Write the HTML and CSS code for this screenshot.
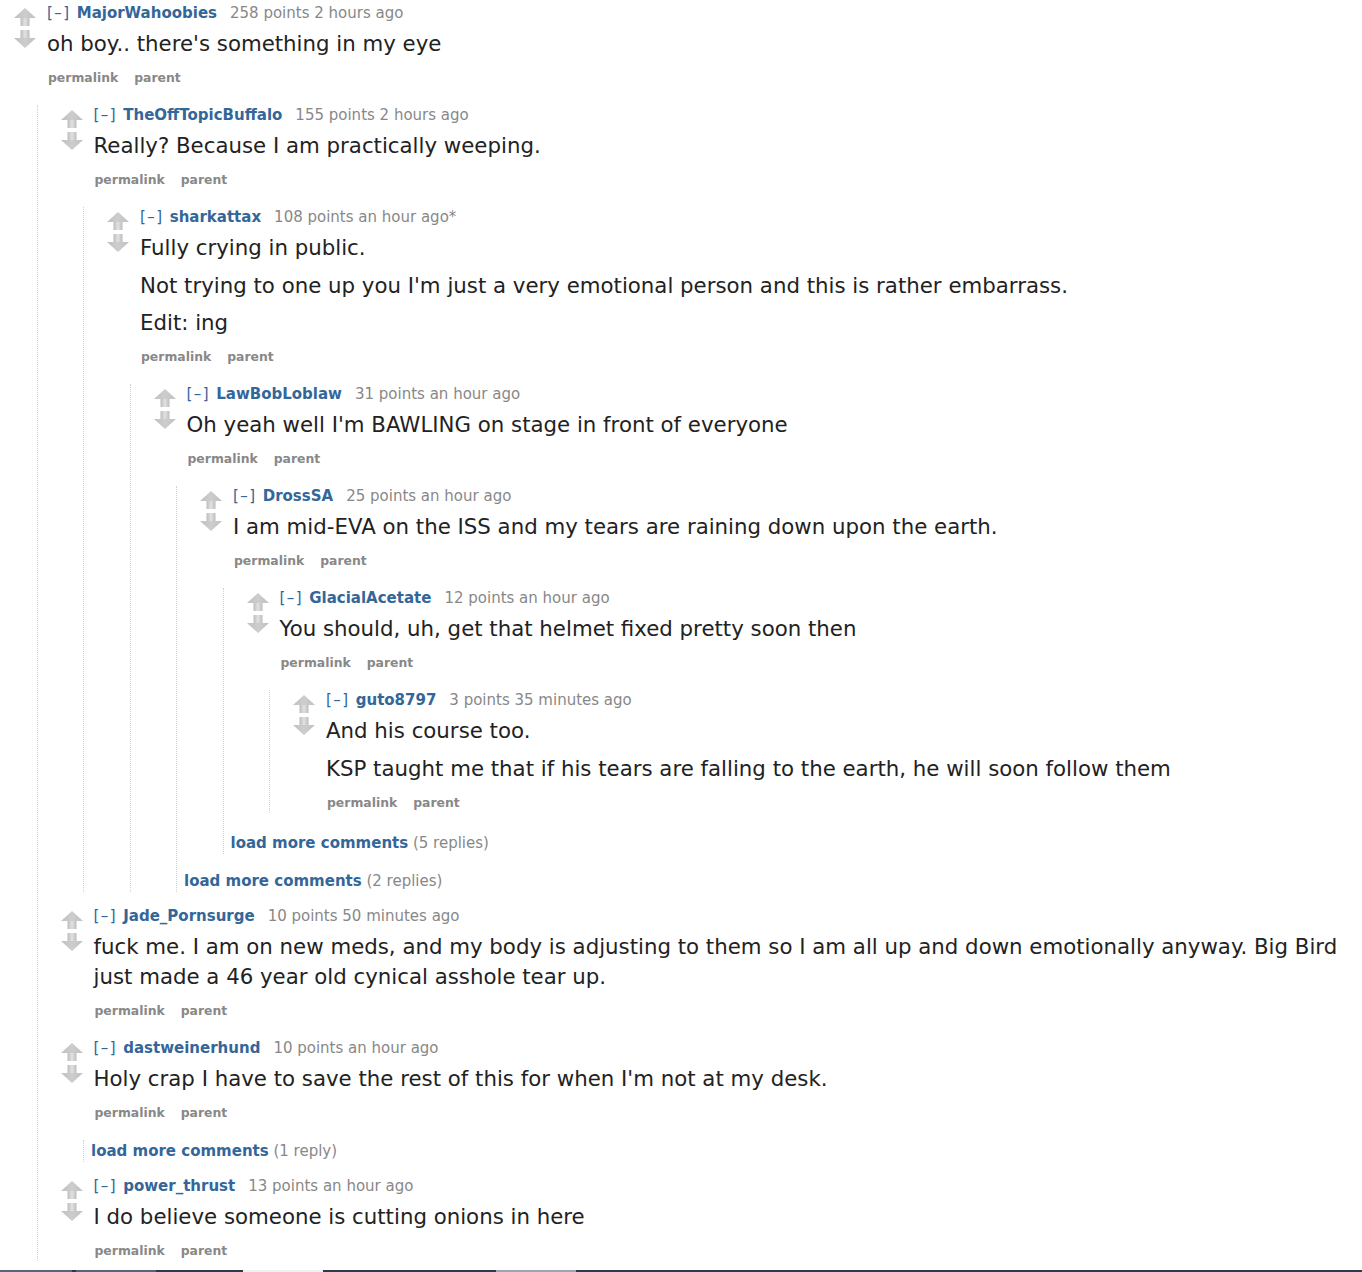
FILE: index.html
```html
<!DOCTYPE html>
<html>
<head>
<meta charset="utf-8">
<title>comments</title>
<link rel="stylesheet" href="styles.css">
</head>
<body>
<svg class="defs" width="0" height="0" aria-hidden="true">
  <defs>
    <linearGradient id="stem" x1="0" y1="0" x2="1" y2="0">
      <stop offset="0" stop-color="#bcbcbc"/>
      <stop offset="0.5" stop-color="#e2e2e2"/>
      <stop offset="1" stop-color="#bcbcbc"/>
    </linearGradient>
    <linearGradient id="head" x1="0" y1="0" x2="1" y2="0">
      <stop offset="0" stop-color="#c0c0c0"/>
      <stop offset="0.5" stop-color="#cdcdcd"/>
      <stop offset="1" stop-color="#c0c0c0"/>
    </linearGradient>
    <symbol id="up" viewBox="0 0 22 18">
      <polygon points="0,10 11,0 22,10" fill="url(#head)"/>
      <rect x="6.5" y="10" width="9" height="8" fill="url(#stem)"/>
    </symbol>
    <symbol id="down" viewBox="0 0 22 18">
      <rect x="6.5" y="0" width="9" height="8" fill="url(#stem)"/>
      <polygon points="0,8 22,8 11,18" fill="url(#head)"/>
    </symbol>
  </defs>
</svg>

<div class="page">
  <div class="comment">
    <div class="row">
      <div class="midcol"><svg class="arrow up"><use href="#up"/></svg><svg class="arrow down"><use href="#down"/></svg></div>
      <div class="entry">
        <p class="tagline"><a class="expand">[–]</a><a class="author">MajorWahoobies</a><span class="score">258 points 2 hours ago</span></p>
        <div class="md"><p>oh boy.. there's something in my eye</p></div>
        <ul class="buttons"><li>permalink</li><li>parent</li></ul>
      </div>
    </div>
    <div class="child">

      <div class="comment">
        <div class="row">
          <div class="midcol"><svg class="arrow up"><use href="#up"/></svg><svg class="arrow down"><use href="#down"/></svg></div>
          <div class="entry">
            <p class="tagline"><a class="expand">[–]</a><a class="author">TheOffTopicBuffalo</a><span class="score">155 points 2 hours ago</span></p>
            <div class="md"><p>Really? Because I am practically weeping.</p></div>
            <ul class="buttons"><li>permalink</li><li>parent</li></ul>
          </div>
        </div>
        <div class="child">

          <div class="comment">
            <div class="row">
              <div class="midcol"><svg class="arrow up"><use href="#up"/></svg><svg class="arrow down"><use href="#down"/></svg></div>
              <div class="entry">
                <p class="tagline"><a class="expand">[–]</a><a class="author">sharkattax</a><span class="score">108 points an hour ago*</span></p>
                <div class="md">
                  <p>Fully crying in public.</p>
                  <p>Not trying to one up you I'm just a very emotional person and this is rather embarrass.</p>
                  <p>Edit: ing</p>
                </div>
                <ul class="buttons"><li>permalink</li><li>parent</li></ul>
              </div>
            </div>
            <div class="child">

              <div class="comment">
                <div class="row">
                  <div class="midcol"><svg class="arrow up"><use href="#up"/></svg><svg class="arrow down"><use href="#down"/></svg></div>
                  <div class="entry">
                    <p class="tagline"><a class="expand">[–]</a><a class="author">LawBobLoblaw</a><span class="score">31 points an hour ago</span></p>
                    <div class="md"><p>Oh yeah well I'm BAWLING on stage in front of everyone</p></div>
                    <ul class="buttons"><li>permalink</li><li>parent</li></ul>
                  </div>
                </div>
                <div class="child">

                  <div class="comment">
                    <div class="row">
                      <div class="midcol"><svg class="arrow up"><use href="#up"/></svg><svg class="arrow down"><use href="#down"/></svg></div>
                      <div class="entry">
                        <p class="tagline"><a class="expand">[–]</a><a class="author">DrossSA</a><span class="score">25 points an hour ago</span></p>
                        <div class="md"><p>I am mid-EVA on the ISS and my tears are raining down upon the earth.</p></div>
                        <ul class="buttons"><li>permalink</li><li>parent</li></ul>
                      </div>
                    </div>
                    <div class="child">

                      <div class="comment">
                        <div class="row">
                          <div class="midcol"><svg class="arrow up"><use href="#up"/></svg><svg class="arrow down"><use href="#down"/></svg></div>
                          <div class="entry">
                            <p class="tagline"><a class="expand">[–]</a><a class="author">GlacialAcetate</a><span class="score">12 points an hour ago</span></p>
                            <div class="md"><p>You should, uh, get that helmet fixed pretty soon then</p></div>
                            <ul class="buttons"><li>permalink</li><li>parent</li></ul>
                          </div>
                        </div>
                        <div class="child">

                          <div class="comment">
                            <div class="row">
                              <div class="midcol"><svg class="arrow up"><use href="#up"/></svg><svg class="arrow down"><use href="#down"/></svg></div>
                              <div class="entry">
                                <p class="tagline"><a class="expand">[–]</a><a class="author">guto8797</a><span class="score">3 points 35 minutes ago</span></p>
                                <div class="md">
                                  <p>And his course too.</p>
                                  <p>KSP taught me that if his tears are falling to the earth, he will soon follow them</p>
                                </div>
                                <ul class="buttons"><li>permalink</li><li>parent</li></ul>
                              </div>
                            </div>
                          </div>

                        </div>
                      </div>

                      <div class="more"><a>load more comments</a> <span>(5 replies)</span></div>
                    </div>
                  </div>

                  <div class="more"><a>load more comments</a> <span>(2 replies)</span></div>
                </div>
              </div>

            </div>
          </div>

        </div>
      </div>

      <div class="comment">
        <div class="row">
          <div class="midcol"><svg class="arrow up"><use href="#up"/></svg><svg class="arrow down"><use href="#down"/></svg></div>
          <div class="entry">
            <p class="tagline"><a class="expand">[–]</a><a class="author">Jade_Pornsurge</a><span class="score">10 points 50 minutes ago</span></p>
            <div class="md"><p>fuck me. I am on new meds, and my body is adjusting to them so I am all up and down emotionally anyway. Big Bird just made a 46 year old cynical asshole tear up.</p></div>
            <ul class="buttons"><li>permalink</li><li>parent</li></ul>
          </div>
        </div>
      </div>

      <div class="comment">
        <div class="row">
          <div class="midcol"><svg class="arrow up"><use href="#up"/></svg><svg class="arrow down"><use href="#down"/></svg></div>
          <div class="entry">
            <p class="tagline"><a class="expand">[–]</a><a class="author">dastweinerhund</a><span class="score">10 points an hour ago</span></p>
            <div class="md"><p>Holy crap I have to save the rest of this for when I'm not at my desk.</p></div>
            <ul class="buttons"><li>permalink</li><li>parent</li></ul>
          </div>
        </div>
        <div class="child">
          <div class="more"><a>load more comments</a> <span>(1 reply)</span></div>
        </div>
      </div>

      <div class="comment">
        <div class="row">
          <div class="midcol"><svg class="arrow up"><use href="#up"/></svg><svg class="arrow down"><use href="#down"/></svg></div>
          <div class="entry">
            <p class="tagline"><a class="expand">[–]</a><a class="author">power_thrust</a><span class="score">13 points an hour ago</span></p>
            <div class="md"><p>I do believe someone is cutting onions in here</p></div>
            <ul class="buttons"><li>permalink</li><li>parent</li></ul>
          </div>
        </div>
      </div>

    </div>
  </div>
</div>

<div class="taskbar">
  <span class="seg s1"></span><span class="seg s2"></span><span class="seg s3"></span><span class="seg s4"></span>
</div>
</body>
</html>
```

FILE: styles.css
```css
html, body {
  margin: 0;
  padding: 0;
  background: #ffffff;
}

body {
  font-family: "DejaVu Sans", Verdana, sans-serif;
  color: #222222;
}

.defs {
  position: absolute;
  width: 0;
  height: 0;
  overflow: hidden;
}

.page {
  padding: 3px 12px 0 0;
}

.comment + .comment {
  margin-top: 17px;
}

.comment + .more {
  margin-top: 19px;
}

.row {
  display: flex;
  align-items: flex-start;
}

.midcol {
  flex: 0 0 33px;
  width: 33px;
  padding-left: 14px;
  display: flex;
  flex-direction: column;
}

.arrow {
  width: 22px;
  height: 18px;
  display: block;
}

.arrow.up {
  margin-top: 5px;
}

.arrow.down {
  margin-top: 4px;
}

.entry {
  flex: 1 1 auto;
  min-width: 0;
}

.tagline {
  margin: 0;
  font-size: 15px;
  line-height: 20px;
  white-space: nowrap;
}

.expand {
  color: #369;
  letter-spacing: 1.5px;
  margin-right: 2px;
}

.author {
  margin-left: 4px;
  color: #369;
  font-weight: bold;
}

.score {
  margin-left: 13px;
  color: #888888;
}

.md {
  margin-top: 6px;
  font-size: 21.3px;
  color: #222222;
}

.md p {
  margin: 0;
  line-height: 30px;
}

.md p + p {
  margin-top: 7.5px;
}

.buttons {
  list-style: none;
  margin: 9px 0 0;
  padding: 0 0 0 1px;
  display: flex;
  gap: 16px;
  font-size: 12.4px;
  font-weight: bold;
  line-height: 20px;
  color: #888888;
}

.child {
  margin-top: 17px;
  margin-left: 36.5px;
  border-left: 1px dotted #ccccf5;
  padding-left: 9px;
}

.more {
  margin-left: -2px;
  font-size: 15px;
  line-height: 22px;
  margin-bottom: -3px;
  white-space: nowrap;
}

.child > .more:first-child {
  margin-top: 2px;
}

.more a {
  color: #369;
  font-weight: bold;
}

.more span {
  color: #888888;
}

.taskbar {
  position: fixed;
  left: 0;
  right: 0;
  bottom: 0;
  height: 2px;
  background: #2b3b4f;
}

.seg {
  position: absolute;
  top: 0;
  height: 2px;
}

.s1 { left: 0; width: 72px; background: #56667a; }
.s2 { left: 76px; width: 80px; background: #56667a; }
.s3 { left: 243px; width: 80px; background: #eef0f2; }
.s4 { left: 496px; width: 80px; background: #9aa6b4; }
```
